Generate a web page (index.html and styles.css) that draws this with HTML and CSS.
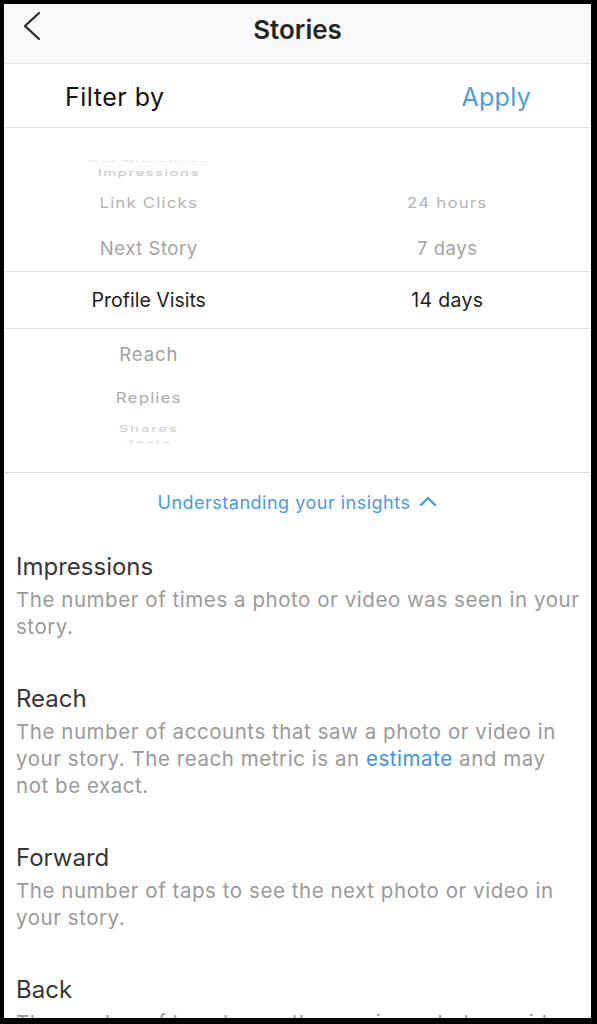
FILE: index.html
```html
<!DOCTYPE html>
<html lang="en">
<head>
  <meta charset="UTF-8" />
  <meta name="viewport" content="width=device-width, initial-scale=1.0"/>
  <title>Stories</title>
  <link rel="stylesheet" href="styles.css">
</head>
<body>
  <div class="screen">
    <header class="nav">
      <svg class="back" width="18" height="30" viewBox="0 0 18 30">
        <polyline points="16,2 2,15 16,28" fill="none" stroke="#262626" stroke-width="2.2" stroke-linecap="round" stroke-linejoin="round"/>
      </svg>
      <h1>Stories</h1>
    </header>

    <div class="filter-bar">
      <span class="filter-title">Filter by</span>
      <a class="apply">Apply</a>
    </div>

    <div class="picker">
      <div class="row ghost-top"><span>Get Directions</span><span></span></div>
      <div class="row far"><span>Impressions</span><span></span></div>
      <div class="row near-top"><span>Link Clicks</span><span>24 hours</span></div>
      <div class="row next"><span>Next Story</span><span>7 days</span></div>
      <div class="row selected"><span>Profile Visits</span><span>14 days</span></div>
      <div class="row reach"><span>Reach</span><span></span></div>
      <div class="row near-bottom"><span>Replies</span><span></span></div>
      <div class="row far-bottom"><span>Shares</span><span></span></div>
      <div class="row ghost-bottom"><span>Texts</span><span></span></div>
    </div>

    <div class="insights-toggle">
      <span>Understanding your insights</span>
      <svg width="18" height="11" viewBox="0 0 18 11">
        <polyline points="2,9 9,2 16,9" fill="none" stroke="#4a9be4" stroke-width="2.4" stroke-linecap="round" stroke-linejoin="round"/>
      </svg>
    </div>

    <div class="terms">
      <div class="term">
        <h2>Impressions</h2>
        <p>The number of times a photo or video was seen in your story.</p>
      </div>
      <div class="term">
        <h2>Reach</h2>
        <p>The number of accounts that saw a photo or video in your story. The reach metric is an <a>estimate</a> and may not be exact.</p>
      </div>
      <div class="term">
        <h2>Forward</h2>
        <p>The number of taps to see the next photo or video in your story.</p>
      </div>
      <div class="term">
        <h2>Back</h2>
        <p>The number of taps to see the previous photo or video in your story.</p>
      </div>
    </div>
  </div>
</body>
</html>
```

FILE: styles.css
```css
html, body {
  margin: 0;
  height: 1024px;
  background: #000;
  overflow: hidden;
}
body {
  font-family: 'Inter', 'Liberation Sans', sans-serif;
}
.screen {
  margin: 4px 6px 0 4px;
  height: 1014px;
  background: #fff;
  overflow: hidden;
}
.nav {
  height: 60px;
  box-sizing: border-box;
  padding-bottom: 9px;
  background: #f8f8f8;
  border-bottom: 1px solid #e4e4e4;
  display: flex;
  align-items: center;
  justify-content: center;
  position: relative;
}
.back {
  position: absolute;
  left: 19px;
  top: 7px;
}
.nav h1 {
  margin: 0;
  font-size: 26px;
  font-weight: 600;
  color: #262626;
}
.filter-bar {
  height: 64px;
  box-sizing: border-box;
  padding: 2px 60px 0 61px;
  border-bottom: 1px solid #e4e4e4;
  display: flex;
  align-items: center;
  justify-content: space-between;
}
.filter-title {
  font-size: 25px;
  letter-spacing: 0.5px;
  color: #111;
}
.apply {
  font-size: 25px;
  letter-spacing: 0.3px;
  color: #4a9de6;
}
.picker {
  height: 345px;
  box-sizing: border-box;
  padding-top: 23px;
  border-bottom: 1px solid #dcdcdc;
  overflow: hidden;
}
.row {
  display: grid;
  grid-template-columns: 1fr 1fr;
  align-items: center;
  overflow: hidden;
}
.row span {
  display: block;
  text-align: center;
  white-space: nowrap;
}
.row span:first-child {
  padding-right: 4px;
}
.row span:last-child {
  padding-left: 6px;
}
.ghost-top {
  height: 11px;
  align-items: end;
}
.ghost-top span {
  font-size: 15px;
  line-height: 14px;
  letter-spacing: 1.5px;
  color: #e2e2e2;
  transform: scaleY(0.35) translateY(12px);
}
.far {
  height: 20px;
}
.far span {
  font-size: 15px;
  color: #c6c6c6;
  letter-spacing: 1.5px;
  transform: scaleY(0.58);
}
.near-top {
  height: 42px;
}
.near-top span {
  font-size: 17px;
  letter-spacing: 1.1px;
  color: #b3b3b3;
  transform: scaleY(0.85);
}
.next {
  height: 47px;
}
.next span {
  font-size: 18.5px;
  letter-spacing: 0.55px;
  color: #a4a4a4;
}
.selected {
  height: 58px;
  box-sizing: border-box;
  border-top: 1px solid #e4e4e4;
  border-bottom: 1px solid #e4e4e4;
}
.selected span {
  font-size: 19.5px;
  color: #1e1e1e;
}
.selected span:last-child {
  letter-spacing: 0.3px;
}
.reach {
  height: 50px;
}
.reach span {
  font-size: 18.5px;
  letter-spacing: 0.9px;
  color: #a0a0a0;
}
.near-bottom {
  height: 38px;
}
.near-bottom span {
  font-size: 17px;
  letter-spacing: 1.1px;
  color: #acacac;
  transform: scaleY(0.85);
}
.far-bottom {
  height: 22px;
}
.far-bottom span {
  font-size: 15px;
  color: #cecece;
  letter-spacing: 1.8px;
  transform: scaleY(0.58);
}
.ghost-bottom {
  height: 8px;
  align-items: start;
}
.ghost-bottom span {
  font-size: 15px;
  line-height: 14px;
  letter-spacing: 1.5px;
  color: #e2e2e2;
  transform: scaleY(0.35) translateY(-10px);
}
.insights-toggle {
  height: 58px;
  display: flex;
  align-items: center;
  justify-content: center;
  gap: 9px;
  font-size: 18px;
  letter-spacing: 0.5px;
  color: #4a9be4;
}
.insights-toggle svg {
  margin-top: -2px;
}
.terms {
  padding: 21px 8px 0 12px;
}
.term {
  margin-bottom: 44px;
}
.term h2 {
  margin: 0;
  font-size: 24px;
  line-height: 30px;
  font-weight: 400;
  color: #363636;
}
.term p {
  margin: 4px 0 0;
  font-size: 20.5px;
  line-height: 27px;
  letter-spacing: 0.55px;
  color: #9a9a9a;
}
.term p a {
  color: #3b94e2;
}
```
